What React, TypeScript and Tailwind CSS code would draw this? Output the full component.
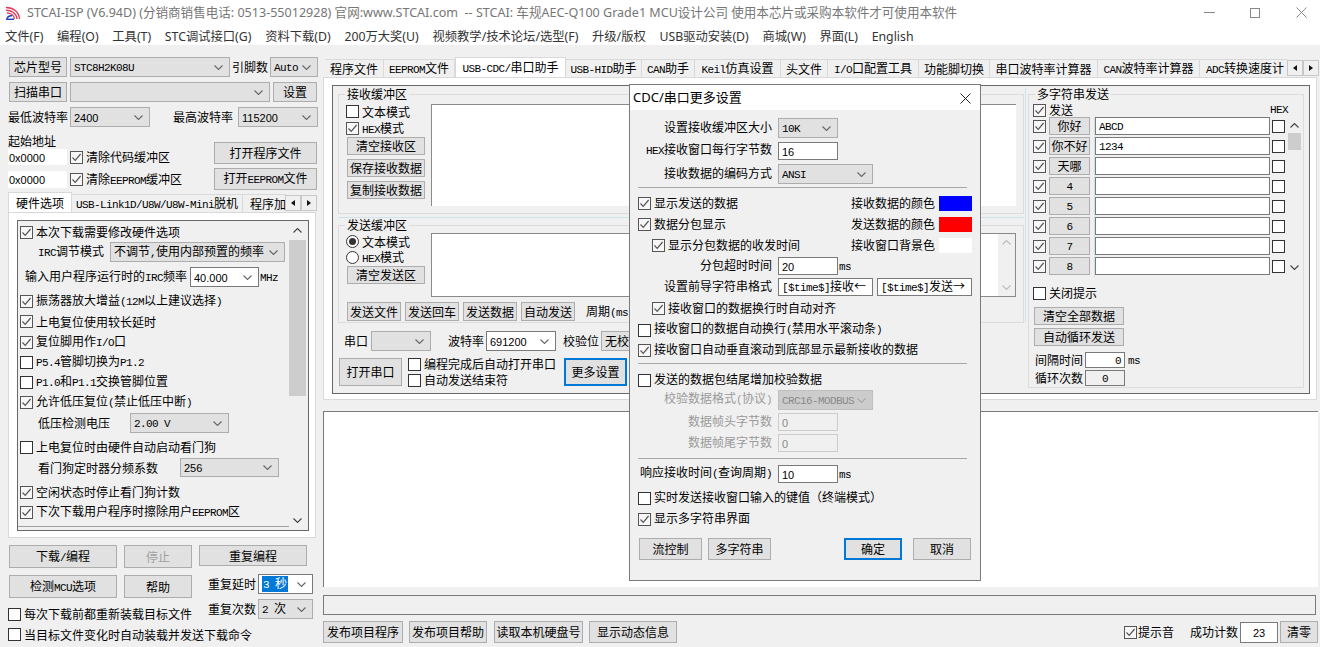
import React from "react";

const MONO = "font-[family-name:'Liberation_Mono',monospace] text-[11px] tracking-[-0.6px]";
const SANS = "font-[family-name:'Liberation_Sans',sans-serif] text-[11px]";

function T({ children, s }: { children: string; s?: boolean }) {
  const parts = children.split(/([\x20-\x7e]+)/);
  return (
    <span className="whitespace-pre">
      {parts.map((p, i) =>
        i % 2 ? (
          <span key={i} className={s ? SANS : MONO}>{p}</span>
        ) : (
          <span key={i}>{p}</span>
        )
      )}
    </span>
  );
}

function Chev({ up, c = "#666" }: { up?: boolean; c?: string }) {
  return (
    <svg width="9" height="5" viewBox="0 0 9 5" className="shrink-0">
      <path d={up ? "M0.5 4.5L4.5 0.5L8.5 4.5" : "M0.5 0.5L4.5 4.5L8.5 0.5"} fill="none" stroke={c} strokeWidth="1.1" />
    </svg>
  );
}

function Btn({ t, c = "", dis, focus }: { t: string; c?: string; dis?: boolean; focus?: boolean }) {
  return (
    <div
      className={`flex items-center justify-center shrink-0 bg-[#e1e1e1] ${
        focus ? "border-2 border-[#0078d7]" : "border border-[#adadad]"
      } ${dis ? "text-[#a0a0a0] bg-[#d0d0d0]" : "text-black"} ${c}`}
    >
      <T>{t}</T>
    </div>
  );
}

function Sel({ t, c = "", s, white, dis, hl }: { t: string; c?: string; s?: boolean; white?: boolean; dis?: boolean; hl?: boolean }) {
  return (
    <div
      className={`flex items-center justify-between shrink-0 pl-[3px] pr-[6px] border ${
        dis
          ? "bg-[#cccccc] border-[#bfbfbf] text-[#8a8a8a]"
          : white
          ? "bg-white border-[#7a7a7a]"
          : "bg-[#e1e1e1] border-[#adadad]"
      } ${c}`}
    >
      {hl ? (
        <span className="bg-[#0078d7] text-white px-[1px]"><T>{t}</T></span>
      ) : (
        <T s={s}>{t}</T>
      )}
      <Chev c={dis ? "#aaa" : "#666"} />
    </div>
  );
}

function Inp({ t = "", c = "", s = true, dis }: { t?: string; c?: string; s?: boolean; dis?: boolean }) {
  return (
    <div
      className={`flex items-center shrink-0 px-[3px] border ${
        dis ? "bg-[#f0f0f0] border-[#cccccc] text-[#888]" : "bg-white border-[#7a7a7a]"
      } ${c}`}
    >
      <T s={s}>{t}</T>
    </div>
  );
}

function Box({ on }: { on?: boolean }) {
  return (
    <span
      className={`flex items-center justify-center w-[13px] h-[13px] shrink-0 border ${
        on ? "border-[#555555] bg-[#f7f7f7]" : "border-[#333333] bg-white"
      }`}
    >
      {on && (
        <svg width="11" height="11" viewBox="0 0 11 11">
          <path d="M1.5 5.5L4.2 8.3L9.6 2" fill="none" stroke="#555" strokeWidth="1.2" />
        </svg>
      )}
    </span>
  );
}

function Chk({ t, on, c = "", up }: { t: string; on?: boolean; c?: string; up?: boolean }) {
  return (
    <div className={`flex items-center gap-[3px] shrink-0 ${c}`}>
      <Box on={on} />
      <span className={up ? "-translate-y-px" : ""}><T>{t}</T></span>
    </div>
  );
}

function Radio({ t, on }: { t: string; on?: boolean }) {
  return (
    <div className="flex items-center gap-[3px] h-[13px]">
      <span className="flex items-center justify-center w-[13px] h-[13px] rounded-full border border-[#333] bg-white">
        {on && <span className="w-[7px] h-[7px] rounded-full bg-[#333]" />}
      </span>
      <span className="leading-[13px]"><T>{t}</T></span>
    </div>
  );
}

function TabArrows({ c = "" }: { c?: string }) {
  return (
    <div className={`flex shrink-0 h-[16px] ${c}`}>
      {["M5 1L1 4L5 7Z", "M1 1L5 4L1 7Z"].map((d) => (
        <div key={d} className="w-[16px] h-[16px] flex items-center justify-center bg-[#f0f0f0] border border-[#c8c8c8]">
          <svg width="6" height="8" viewBox="0 0 6 8"><path d={d} fill="#111" /></svg>
        </div>
      ))}
    </div>
  );
}

function Group({ t, c = "", children }: { t: string; c?: string; children: React.ReactNode }) {
  return (
    <div className={`relative border border-[#dcdcdc] ${c}`}>
      <span className="absolute -top-[8px] left-[6px] bg-[#f0f0f0] px-[2px] leading-[14px]">{t}</span>
      {children}
    </div>
  );
}

const topTabs: [string, string, boolean?][] = [
  ["程序文件", "w-[59px]"],
  ["EEPROM文件", "w-[71px]"],
  ["USB-CDC/串口助手", "w-[111px]", true],
  ["USB-HID助手", "w-[76px]"],
  ["CAN助手", "w-[53px]"],
  ["Keil仿真设置", "w-[86px]"],
  ["头文件", "w-[47px]"],
  ["I/O口配置工具", "w-[91px]"],
  ["功能脚切换", "w-[71px]"],
  ["串口波特率计算器", "w-[108px]"],
  ["CAN波特率计算器", "w-[102px]"],
];

const menus = ["文件(F)", "编程(O)", "工具(T)", "STC调试接口(G)", "资料下载(D)", "200万大奖(U)", "视频教学/技术论坛/选型(F)", "升级/版权", "USB驱动安装(D)", "商城(W)", "界面(L)", "English"];

const strRows: [string, string][] = [
  ["你好", "ABCD"],
  ["你不好", "1234"],
  ["天哪", ""],
  ["4", ""],
  ["5", ""],
  ["6", ""],
  ["7", ""],
  ["8", ""],
];

function TitleBar() {
  return (
    <div className="flex items-center h-[24px] bg-white shrink-0 pl-[6px] pt-[1px] text-[#767676] text-[12.55px]">
      <svg width="15" height="14" viewBox="0 0 15 14" className="shrink-0">
        <path d="M0 1.500C7 1.500 13 5.500 13.500 13" fill="none" stroke="#e0395a" strokeWidth="1.400" />
        <path d="M0 4.200C5.500 4.200 10.500 7.500 11 13" fill="none" stroke="#e0395a" strokeWidth="1.400" />
        <path d="M1 7C4.500 7 8 9 8.500 13" fill="none" stroke="#e0395a" strokeWidth="1.400" />
        <path d="M1 12.800C1.500 10.500 3.500 9.500 6 9.800" fill="none" stroke="#1f45c0" strokeWidth="1.400" />
        <path d="M0 13.300H8" stroke="#1f45c0" strokeWidth="1.400" />
      </svg>
      <span className="ml-[6px] whitespace-pre font-[family-name:'Noto_Sans','Noto_Sans_CJK_SC',sans-serif]">
        STCAI-ISP (V6.94D) (分销商销售电话: 0513-55012928) 官网:www.STCAI.com  -- STCAI: 车规AEC-Q100 Grade1 MCU设计公司 使用本芯片或采购本软件才可使用本软件
      </span>
      <div className="ml-auto flex items-center h-full">
        <svg width="11" height="11" viewBox="0 0 11 11" className="mr-[35px]"><path d="M0 5.500H11" stroke="#888" /></svg>
        <svg width="10" height="10" viewBox="0 0 10 10" className="mr-[36px]"><rect x="0.500" y="0.500" width="9" height="9" fill="none" stroke="#888" /></svg>
        <svg width="11" height="11" viewBox="0 0 11 11" className="mr-[13px]"><path d="M0.500 0.500L10.500 10.500M10.500 0.500L0.500 10.500" stroke="#888" /></svg>
      </div>
    </div>
  );
}

function MenuBar() {
  return (
    <div className="flex items-start h-[21px] bg-white shrink-0 pl-[5px] pt-[6px] gap-[13.7px] text-[12.3px] text-[#333] font-[family-name:'Noto_Sans','Noto_Sans_CJK_SC',sans-serif] whitespace-pre">
      {menus.map((m) => <span key={m}>{m}</span>)}
    </div>
  );
}

function HwOptions() {
  return (
    <div className="flex h-full">
      <div className="flex-1 flex flex-col pl-[2px] pt-[1px]">
        <Chk on t="本次下载需要修改硬件选项" c="h-[20px]" />
        <div className="flex items-center h-[20px]">
          <span className="ml-[18px] w-[72px]"><T>IRC调节模式</T></span>
          <Sel t="不调节,使用内部预置的频率" c="w-[175px] h-[20px]" />
        </div>
        <div className="flex items-center h-[20px] mt-[5px]">
          <span className="ml-[5px] w-[165px]"><T>输入用户程序运行时的IRC频率</T></span>
          <Sel t="40.000" s white c="w-[69px] h-[20px]" />
          <span className="ml-[1px]"><T>MHz</T></span>
        </div>
        <Chk on t="振荡器放大增益(12M以上建议选择)" c="h-[20px] mt-[4px]" />
        <Chk on t="上电复位使用较长延时" c="h-[21px]" />
        <Chk on t="复位脚用作I/O口" c="h-[20px]" />
        <Chk t="P5.4管脚切换为P1.2" c="h-[20px]" />
        <Chk t="P1.0和P1.1交换管脚位置" c="h-[20px]" />
        <Chk on t="允许低压复位(禁止低压中断)" c="h-[20px]" />
        <div className="flex items-center h-[20px] mt-[1px]">
          <span className="ml-[18px] w-[92px]">低压检测电压</span>
          <Sel t="2.00 V" c="w-[99px] h-[20px]" />
        </div>
        <Chk t="上电复位时由硬件自动启动看门狗" c="h-[20px] mt-[4px]" />
        <div className="flex items-center h-[19px] mt-[1px]">
          <span className="ml-[18px] w-[142px]">看门狗定时器分频系数</span>
          <Sel t="256" s c="w-[99px] h-[19px]" />
        </div>
        <Chk on t="空闲状态时停止看门狗计数" c="h-[20px] mt-[5px]" />
        <Chk on t="下次下载用户程序时擦除用户EEPROM区" c="h-[20px]" />
        <div className="h-px bg-[#a0a0a0] mt-[4px] -ml-[2px]" />
      </div>
      <div className="w-[17px] mr-[2px] flex flex-col items-center">
        <div className="h-[19px] flex items-center"><Chev up c="#444" /></div>
        <div className="w-full h-[156px] bg-[#cdcdcd]" />
        <div className="flex-1 flex items-end pb-[7px]"><Chev c="#444" /></div>
      </div>
    </div>
  );
}

function LeftPanel() {
  return (
    <div className="w-[322px] shrink-0 flex flex-col pt-[12px]">
      <div className="flex items-center pl-[9px] h-[20px]">
        <Btn t="芯片型号" c="w-[58px] h-[20px]" />
        <Sel t="STC8H2K08U" c="ml-[3px] w-[160px] h-[20px]" />
        <span className="ml-[2px] w-[38px]">引脚数</span>
        <Sel t="Auto" c="w-[48px] h-[20px]" />
      </div>
      <div className="flex items-center pl-[9px] h-[20px] mt-[5px]">
        <Btn t="扫描串口" c="w-[58px] h-[20px]" />
        <Sel t="" c="ml-[3px] w-[200px] h-[20px]" />
        <Btn t="设置" c="ml-[3px] w-[44px] h-[20px]" />
      </div>
      <div className="flex items-center pl-[8px] h-[20px] mt-[5px]">
        <span className="w-[62px]">最低波特率</span>
        <Sel t="2400" s c="w-[80px] h-[20px]" />
        <span className="ml-[23px] w-[65px]">最高波特率</span>
        <Sel t="115200" s c="w-[80px] h-[20px]" />
      </div>
      <div className="flex pl-[8px] h-[63px] mt-[2px]">
        <div className="w-[206px] flex flex-col">
          <div className="h-[20px] flex items-end pb-[1px]">起始地址</div>
          <div className="flex items-center h-[16px]">
            <Inp t="0x0000" c="w-[59px] h-[16px] bg-white border-transparent !px-0" />
            <Chk on t="清除代码缓冲区" c="ml-[3px]" />
          </div>
          <div className="flex items-center h-[17px] mt-[6px]">
            <Inp t="0x0000" c="w-[59px] h-[17px] bg-white border-transparent !px-0" />
            <Chk on t="清除EEPROM缓冲区" c="ml-[3px]" />
          </div>
        </div>
        <div className="flex flex-col pt-[13px]">
          <Btn t="打开程序文件" c="w-[103px] h-[22px]" />
          <Btn t="打开EEPROM文件" c="w-[103px] h-[22px] mt-[4px]" />
        </div>
      </div>
      <div className="flex items-end h-[20px] ml-[8px] mt-[0px] w-[310px]">
        <div className="w-[64px] h-[20px] bg-white border border-b-0 border-[#d9d9d9] flex items-center justify-center">硬件选项</div>
        <div className="w-[171px] h-[18px] bg-[#f0f0f0] border-t border-r border-[#d9d9d9] flex items-center justify-center"><T>USB-Link1D/U8W/U8W-Mini脱机</T></div>
        <div className="w-[43px] h-[18px] bg-[#f0f0f0] border-t border-[#d9d9d9] overflow-hidden pl-[7px] flex items-center whitespace-nowrap">程序加</div>
        <TabArrows c="-ml-[1px] mb-[1px]" />
      </div>
      <div className="ml-[8px] w-[308px] h-[326px] bg-white border border-[#d9d9d9] pt-[7px] pl-[8px]">
        <div className="w-[292px] h-[311px] border border-[#696969] bg-[#f0f0f0]">
          <HwOptions />
        </div>
      </div>
      <div className="flex items-start h-[23px] pl-[9px] mt-[7px]">
        <Btn t="下载/编程" c="w-[108px] h-[23px]" />
        <Btn t="停止" dis c="ml-[7px] w-[68px] h-[23px]" />
        <Btn t="重复编程" c="ml-[7px] w-[108px] h-[21px]" />
      </div>
      <div className="flex mt-[6px]">
        <div className="w-[208px] flex flex-col">
          <div className="flex pl-[9px] h-[23px] mt-[1px]">
            <Btn t="检测MCU选项" c="w-[108px] h-[23px]" />
            <Btn t="帮助" c="ml-[7px] w-[68px] h-[23px]" />
          </div>
          <Chk t="每次下载前都重新装载目标文件" c="ml-[8px] mt-[6px] h-[20px]" />
          <Chk t="当目标文件变化时自动装载并发送下载命令" c="ml-[8px] h-[21px]" />
        </div>
        <div className="flex flex-col">
          <div className="flex items-center h-[20px]">
            <span className="w-[50px]">重复延时</span>
            <Sel t="3 秒" white hl c="w-[55px] h-[20px]" />
          </div>
          <div className="flex items-center h-[20px] mt-[5px]">
            <span className="w-[50px]">重复次数</span>
            <Sel t="2 次" c="w-[55px] h-[20px]" />
          </div>
        </div>
      </div>
    </div>
  );
}

function Cdc() {
  return (
    <div className="w-[692px] shrink-0 pl-[5px] pt-[8px] flex flex-col">
      <Group t="接收缓冲区" c="w-[686px] h-[120px] flex items-start">
        <div className="w-[92px] pl-[7px] pt-[10px] flex flex-col shrink-0">
          <Chk t="文本模式" c="h-[13px]" />
          <Chk on t="HEX模式" c="h-[13px] mt-[4px]" />
          <Btn t="清空接收区" c="w-[78px] h-[18px] mt-[2px] ml-px" />
          <Btn t="保存接收数据" c="w-[78px] h-[18px] mt-[4px] ml-px" />
          <Btn t="复制接收数据" c="w-[78px] h-[18px] mt-[4px] ml-px" />
        </div>
        <div className="w-[585px] h-[102px] mt-[9px] bg-white border-l border-t border-[#8a8a8a]" />
      </Group>
      <div className="h-px w-[686px] mt-[3px] bg-[#cde4ec]" />
      <Group t="发送缓冲区" c="w-[686px] h-[98px] mt-[7px]">
        <div className="flex items-start h-[71px]">
          <div className="w-[92px] pl-[7px] pt-[9px] flex flex-col shrink-0">
            <Radio on t="文本模式" />
            <div className="mt-[3px]"><Radio t="HEX模式" /></div>
            <Btn t="清空发送区" c="w-[78px] h-[18px] mt-[2px] ml-px" />
          </div>
          <div className="w-[585px] h-[64px] mt-[7px] bg-white border border-[#8a8a8a] flex justify-end">
            <div className="w-[17px] bg-[#f0f0f0] flex flex-col items-center justify-between py-[6px]">
              <Chev up c="#bbb" />
              <Chev c="#bbb" />
            </div>
          </div>
        </div>
        <div className="flex items-center gap-[4px] pl-[8px] mt-[5px]">
          {["发送文件", "发送回车", "发送数据", "自动发送"].map((b) => (
            <Btn key={b} t={b} c="w-[54px] h-[19px]" />
          ))}
          <span className="ml-[7px] whitespace-nowrap"><T>周期(ms)</T></span>
        </div>
      </Group>
      <div className="flex items-center h-[20px] mt-[8px] pl-[6px]">
        <span className="w-[24px]">串口</span>
        <Sel t="" c="ml-[3px] w-[60px] h-[20px]" />
        <span className="ml-[17px] w-[36px]">波特率</span>
        <Sel t="691200" s white c="ml-[2px] w-[70px] h-[20px]" />
        <span className="ml-[7px] w-[36px]">校验位</span>
        <Sel t="无校验" c="ml-[2px] w-[79px] h-[20px]" />
      </div>
      <div className="flex items-center h-[28px] mt-[7px] pl-[1px]">
        <Btn t="打开串口" c="w-[63px] h-[28px]" />
        <div className="ml-[6px] w-[156px] flex flex-col gap-[2px]">
          <Chk t="编程完成后自动打开串口" />
          <Chk t="自动发送结束符" />
        </div>
        <Btn t="更多设置" focus c="w-[63px] h-[28px]" />
      </div>
    </div>
  );
}

function MultiStr() {
  return (
    <Group t="多字符串发送" c="w-[276px] h-[294px] ml-[2px] mt-[8px]">
      <div className="flex items-center h-[13px] mt-[9px] pl-[4px]">
        <Chk on up t="发送" />
        <span className="ml-auto mr-[15px] -translate-y-[2px]"><T>HEX</T></span>
      </div>
      <div className="flex pl-[4px]">
        <div className="flex flex-col">
          {strRows.map(([l, v]) => (
            <div key={l} className="flex items-start h-[20px]">
              <div className="h-[18px] flex items-center"><Box on /></div>
              <Btn t={l} c="ml-[3px] w-[41px] h-[18px]" />
              <div className="ml-[4px] w-px h-[20px] bg-[#cde4ec]" />
              <Inp t={v} s={false} c="w-[175px] h-[18px]" />
              <div className="ml-[2px] h-[18px] flex items-center"><Box /></div>
            </div>
          ))}
        </div>
        <div className="ml-[3px] w-[13px] h-[160px] flex flex-col items-center">
          <div className="h-[16px] flex items-center"><Chev up c="#444" /></div>
          <div className="w-full h-[17px] bg-[#cdcdcd]" />
          <div className="flex-1 flex items-end pb-[7px]"><Chev c="#444" /></div>
        </div>
      </div>
      <Chk up t="关闭提示" c="mt-[10px] ml-[4px] h-[13px]" />
      <Btn t="清空全部数据" c="ml-[5px] mt-[7px] w-[90px] h-[18px]" />
      <Btn t="自动循环发送" c="ml-[5px] mt-[3px] w-[90px] h-[18px]" />
      <div className="flex items-center ml-[6px] mt-[6px] h-[16px]">
        <span className="w-[50px]">间隔时间</span>
        <div className="w-[40px] h-[16px] bg-white border border-[#7a7a7a] flex items-center justify-end pr-[3px]"><T>0</T></div>
        <span className="ml-[3px]"><T>ms</T></span>
      </div>
      <div className="flex items-center ml-[6px] mt-[2px] h-[16px]">
        <span className="w-[50px]">循环次数</span>
        <div className="w-[40px] h-[16px] bg-[#f0f0f0] border border-[#7a7a7a] flex items-center justify-center"><T>0</T></div>
      </div>
    </Group>
  );
}

function RightPanel() {
  return (
    <div className="w-[998px] shrink-0 flex flex-col pt-[12px]">
      <div className="flex items-end h-[20px] ml-[3px]">
        {topTabs.map(([t, w, on]) => (
          <div
            key={t}
            className={`flex items-center justify-center shrink-0 whitespace-pre border-r border-[#d9d9d9] ${w} ${
              on ? "h-[20px] bg-white border-t border-l" : "h-[18px] bg-[#f0f0f0] border-t"
            }`}
          >
            <T>{t}</T>
          </div>
        ))}
        <div className="w-[87px] h-[18px] border-t border-[#d9d9d9] overflow-hidden pl-[6px] flex items-center whitespace-pre"><T>ADC转换速度计</T></div>
        <TabArrows c="mb-[1px]" />
      </div>
      <div className="ml-[1px] w-[994px] h-[323px] bg-white border border-[#d9d9d9] pl-[8px] pt-[7px]">
        <div className="w-[978px] h-[309px] border border-[#696969] bg-[#f0f0f0] flex items-start">
          <Cdc />
          <div className="w-px h-[234px] mt-[2px] bg-[#cde4ec] shrink-0" />
          <MultiStr />
        </div>
      </div>
      <div className="mt-[11px] ml-[1px] w-[995px] h-[176px] bg-white border-t border-l border-[#7a7a7a]" />
      <div className="mt-[8px] ml-[1px] w-[993px] h-[20px] border border-[#7a7a7a] bg-[#f0f0f0]" />
      <div className="flex items-center mt-[6px] h-[22px] pl-[1px]">
        <Btn t="发布项目程序" c="w-[80px] h-[22px]" />
        <Btn t="发布项目帮助" c="ml-[6px] w-[78px] h-[22px]" />
        <Btn t="读取本机硬盘号" c="ml-[7px] w-[89px] h-[22px]" />
        <Btn t="显示动态信息" c="ml-[6px] w-[88px] h-[22px]" />
        <Chk on t="提示音" c="ml-[447px] w-[66px] !gap-[1px]" />
        <span className="w-[50px]">成功计数</span>
        <div className="w-[38px] h-[21px] bg-white border border-[#7a7a7a] flex items-center justify-center"><T s>23</T></div>
        <Btn t="清零" c="ml-[2px] w-[38px] h-[22px]" />
      </div>
    </div>
  );
}

function DRow({ l, c = "", dis, children }: { l: string; c?: string; dis?: boolean; children?: React.ReactNode }) {
  return (
    <div className={`flex items-center shrink-0 ${c}`}>
      <div className={`w-[142px] text-right -translate-y-px ${dis ? "text-[#9a9a9a]" : ""}`}><T>{l}</T></div>
      <div className="ml-[6px] flex items-center h-full">{children}</div>
    </div>
  );
}

function Hr({ c = "" }: { c?: string }) {
  return <div className={`h-px mx-[8px] w-[329px] bg-[#a8a8a8] shrink-0 ${c}`} />;
}

function Dialog() {
  return (
    <div className="absolute left-[629px] top-[84px] w-[352px] h-[497px] border border-[#7a7a7a] bg-[#f0f0f0] flex flex-col">
      <div className="flex items-center justify-between h-[25px] bg-white pl-[3px] pr-[9px] shrink-0 text-[13px] font-[family-name:'Noto_Sans','Noto_Sans_CJK_SC',sans-serif]">
        <span className="-translate-y-px">CDC/串口更多设置</span>
        <svg width="11" height="11" viewBox="0 0 11 11" className="translate-y-px"><path d="M0.500 0.500L10.500 10.500M10.500 0.500L0.500 10.500" stroke="#222" /></svg>
      </div>
      <div className="flex flex-col pt-[8px]">
        <DRow l="设置接收缓冲区大小" c="h-[20px]"><Sel t="10K" c="w-[60px] h-[20px]" /></DRow>
        <DRow l="HEX接收窗口每行字节数" c="h-[18px] mt-[4px]"><Inp t="16" c="w-[60px] h-[18px]" /></DRow>
        <DRow l="接收数据的编码方式" c="h-[20px] mt-[4px]"><Sel t="ANSI" c="w-[95px] h-[20px]" /></DRow>
        <Hr c="mt-[3px]" />
        <div className="flex items-center h-[21px] mt-[5px] pl-[8px]">
          <Chk up on t="显示发送的数据" c="w-[213px]" />
          <span className="w-[88px] -translate-y-px">接收数据的颜色</span>
          <div className="w-[33px] h-[15px] bg-[#0000ff]" />
        </div>
        <div className="flex items-center h-[21px] pl-[8px]">
          <Chk up on t="数据分包显示" c="w-[213px]" />
          <span className="w-[88px] -translate-y-px">发送数据的颜色</span>
          <div className="w-[33px] h-[15px] bg-[#ff0000]" />
        </div>
        <div className="flex items-center h-[21px] pl-[22px]">
          <Chk up on t="显示分包数据的收发时间" c="w-[199px]" />
          <span className="w-[88px] -translate-y-px">接收窗口背景色</span>
          <div className="w-[33px] h-[15px] bg-white" />
        </div>
        <DRow l="分包超时时间" c="h-[18px] mt-[1px]">
          <Inp t="20" c="w-[60px] h-[18px]" />
          <span className="ml-[1px]"><T>ms</T></span>
        </DRow>
        <DRow l="设置前导字符串格式" c="h-[18px] mt-[3px]">
          <Inp s={false} t="[$time$]接收←" c="w-[95px] h-[18px]" />
          <Inp s={false} t="[$time$]发送→" c="ml-[4px] w-[95px] h-[18px]" />
        </DRow>
        <Chk up on t="接收窗口的数据换行时自动对齐" c="h-[21px] mt-[2px] pl-[22px]" />
        <Chk up t="接收窗口的数据自动换行(禁用水平滚动条)" c="h-[20px] mt-[1px] pl-[8px]" />
        <Chk up on t="接收窗口自动垂直滚动到底部显示最新接收的数据" c="h-[20px] pl-[8px]" />
        <Hr c="mt-[3px]" />
        <Chk up t="发送的数据包结尾增加校验数据" c="h-[20px] mt-[6px] pl-[8px]" />
        <DRow dis l="校验数据格式(协议)" c="h-[20px]"><Sel dis t="CRC16-MODBUS" c="w-[95px] h-[20px]" /></DRow>
        <DRow dis l="数据帧头字节数" c="h-[18px] mt-[3px]"><Inp dis t="0" c="w-[60px] h-[18px]" /></DRow>
        <DRow dis l="数据帧尾字节数" c="h-[18px] mt-[3px]"><Inp dis t="0" c="w-[60px] h-[18px]" /></DRow>
        <Hr c="mt-[6px]" />
        <DRow l="响应接收时间(查询周期)" c="h-[18px] mt-[6px]">
          <Inp t="10" c="w-[60px] h-[18px]" />
          <span className="ml-[1px]"><T>ms</T></span>
        </DRow>
        <Chk up t="实时发送接收窗口输入的键值（终端模式）" c="h-[20px] mt-[5px] pl-[8px]" />
        <Chk up on t="显示多字符串界面" c="h-[20px] mt-[1px] pl-[8px]" />
        <div className="flex items-center h-[22px] mt-[9px] pl-[9px]">
          <Btn t="流控制" c="w-[63px] h-[22px]" />
          <Btn t="多字符串" c="ml-[6px] w-[63px] h-[22px]" />
          <Btn t="确定" focus c="ml-[73px] w-[58px] h-[22px]" />
          <Btn t="取消" c="ml-[11px] w-[58px] h-[22px]" />
        </div>
      </div>
    </div>
  );
}

export default function App() {
  return (
    <div className="relative w-[1320px] h-[647px] overflow-hidden flex flex-col bg-[#f0f0f0] text-black text-[12px] leading-[14px] font-[family-name:'Noto_Sans_CJK_SC','Liberation_Sans',sans-serif]">
      <TitleBar />
      <MenuBar />
      <div className="flex flex-1 min-h-0">
        <LeftPanel />
        <RightPanel />
      </div>
      <Dialog />
    </div>
  );
}
